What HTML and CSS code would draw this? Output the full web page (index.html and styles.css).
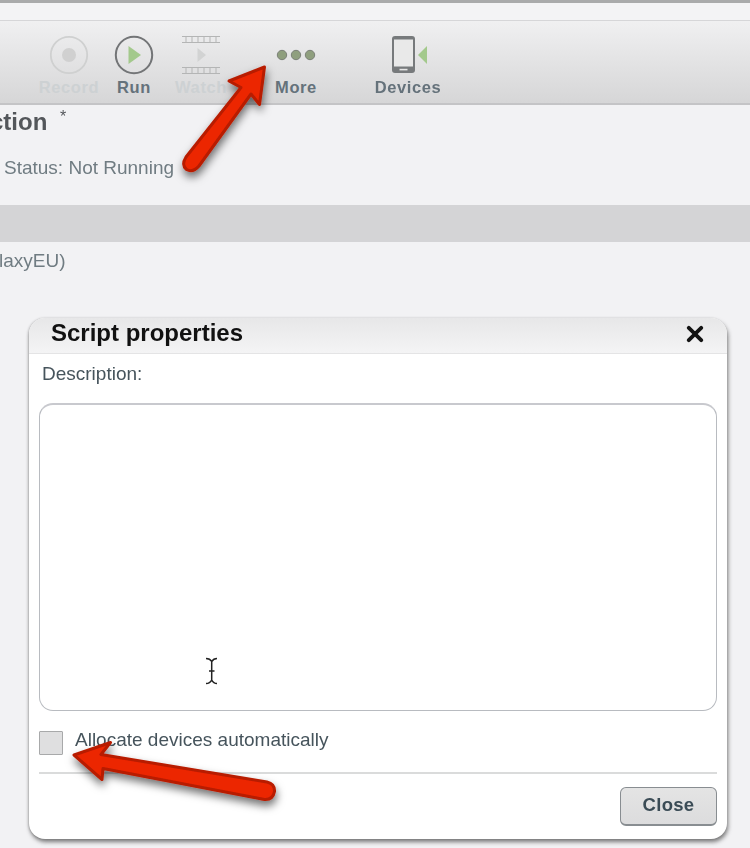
FILE: index.html
```html
<!DOCTYPE html>
<html lang="en">
<head>
<meta charset="utf-8">
<title>Script properties</title>
<link rel="stylesheet" href="styles.css">
</head>
<body>
<div class="page">
  <div class="topline"></div>
  <div class="topstrip"></div>
  <div class="toolbar">
    <div class="tool tool-off">
      <svg class="tool-icon" viewBox="0 0 40 40"><circle cx="20" cy="20" r="18.200" fill="none" stroke="#cfd0d0" stroke-width="1.800"/><circle cx="20" cy="20" r="7" fill="#d0d0d0"/></svg>
      <span class="tool-label">Record</span>
    </div>
    <div class="tool tool-run">
      <svg class="tool-icon" viewBox="0 0 40 40"><circle cx="20" cy="20" r="18.200" fill="none" stroke="#737577" stroke-width="2"/><path d="M14.500 11 L27 20 L14.500 29 Z" fill="#a3c98c"/></svg>
      <span class="tool-label">Run</span>
    </div>
    <div class="tool tool-off tool-watch">
      <svg class="tool-icon" viewBox="0 0 40 40"><g fill="none" stroke="#b4b5b5" stroke-width="1"><path d="M1 1.500H39M1 7.500H39M1 32.500H39M1 38.500H39"/><path d="M5 2V7M11 2V7M17 2V7M23 2V7M29 2V7M35 2V7M5 33V38M11 33V38M17 33V38M23 33V38M29 33V38M35 33V38"/></g><path d="M16.500 13 L25 20 L16.500 27 Z" fill="#d2d3d3"/></svg>
      <span class="tool-label">Watch</span>
    </div>
    <div class="tool tool-more">
      <svg class="tool-icon" viewBox="0 0 40 40"><g fill="#8f9f7e" stroke="#7b8077" stroke-width="1"><circle cx="6" cy="20" r="4.700"/><circle cx="20" cy="20" r="4.700"/><circle cx="34" cy="20" r="4.700"/></g></svg>
      <span class="tool-label">More</span>
    </div>
    <div class="tool tool-devices">
      <svg class="tool-icon" viewBox="0 0 40 40"><rect x="4" y="1" width="23" height="37" rx="3" fill="#777a7c"/><rect x="6" y="4.500" width="19" height="27" fill="#e9e9e9"/><rect x="11.500" y="33.800" width="8" height="1.600" fill="#e6e6e6"/><path d="M39 11 V29 L30 20 Z" fill="#a3c98c"/></svg>
      <span class="tool-label">Devices</span>
    </div>
  </div>
  <div class="summary">
    <h1 class="summary-title">ction <sup class="star">*</sup></h1>
    <p class="summary-status">Status: Not Running</p>
  </div>
  <div class="band"></div>
  <p class="device">laxyEU)</p>

  <section class="dialog">
    <header class="dialog-head">
      <h2 class="dialog-title">Script properties</h2>
      <svg class="dialog-x" viewBox="0 0 16 16"><path d="M2.500 2.500 L13.500 13.500 M13.500 2.500 L2.500 13.500" stroke="#141414" stroke-width="3.400" stroke-linecap="round"/></svg>
    </header>
    <div class="dialog-body">
      <label class="field-label" for="desc">Description:</label>
      <textarea class="field-area" id="desc"></textarea>
      <label class="check-row"><input class="check-box" type="checkbox"><span>Allocate devices automatically</span></label>
      <div class="dialog-foot"><button class="close-btn" type="button">Close</button></div>
    </div>
  </section>

  <svg class="overlay" viewBox="0 0 750 848" aria-hidden="true">
    <defs>
      <filter id="arrow-shadow" x="-30%" y="-30%" width="170%" height="170%"><feDropShadow dx="1" dy="5" stdDeviation="4" flood-color="#000" flood-opacity="0.55"/></filter>
    </defs>
    <g fill="#ec2600" stroke="#b81c00" stroke-width="3" stroke-linejoin="round" filter="url(#arrow-shadow)">
      <path d="M264.500 67 L259.500 104.500 L251 94 L199 166 Q193 173 186.500 169.500 Q181 165 186 157 L241 87.500 L229 81 Z"/>
      <path d="M74 755 L110.500 742.500 L101 754.500 L267 782 Q275 784 274.500 791.500 Q273 800 264.500 799.500 L103 768.500 L102 779.500 Z"/>
    </g>
    <path d="M206 658.500 Q210 658.500 211.700 661.500 Q213.500 658.500 217 658.500 M211.700 661.500 V680 M206 683.500 Q210 683.500 211.700 680 Q213.500 683.500 217 683.500 M209 671 H214.500" fill="none" stroke="#222" stroke-width="1.500"/>
  </svg>
</div>
</body>
</html>
```
FILE: styles.css
```css
* { box-sizing: border-box; }
html, body { margin: 0; padding: 0; }
body { width: 750px; height: 848px; overflow: hidden; background: #f2f2f4; font-family: "Liberation Sans", Arial, sans-serif; }
.page { position: relative; width: 750px; height: 848px; overflow: hidden; filter: blur(0.45px); }

.topline { height: 3px; background: #a9aaab; }
.topstrip { height: 17px; background: #f3f3f5; }

.toolbar { height: 85px; display: flex; padding-left: 39px; padding-top: 14px; border-top: 1px solid #d6d6d8; border-bottom: 2px solid #c4c4c6; background: linear-gradient(#f0f0f1, #d6d6d7); }
.tool { width: 60px; display: flex; flex-direction: column; align-items: center; }
.tool-run { margin-left: 5px; }
.tool-watch { margin-left: 7px; }
.tool-more { margin-left: 35px; }
.tool-devices { margin-left: 52px; }
.tool-icon { width: 40px; height: 40px; flex: none; }
.tool-label { margin-top: 3px; font-size: 16.500px; line-height: 18px; font-weight: 700; letter-spacing: 0.6px; color: #65727b; white-space: nowrap; }
.tool-off .tool-label { color: #cdd1d3; }

.summary { height: 100px; padding-top: 3px; }
.summary-title { margin: 0 0 0 -10px; font-size: 24px; line-height: 28px; font-weight: 700; color: #53565a; }
.star { font-size: 16px; font-weight: 400; line-height: 0; margin-left: 6px; vertical-align: 8px; }
.summary-status { margin: 21px 0 0 4px; font-size: 19px; line-height: 22px; color: #707c82; }

.band { height: 37px; background: #d4d4d6; }
.device { margin: 8px 0 0 -1px; font-size: 19px; line-height: 22px; color: #707c82; }

.dialog { margin: 46px 0 0 29px; width: 698px; height: 521px; background: #fff; border-radius: 16px; box-shadow: 1px 3px 4px rgba(40, 40, 40, 0.6), -1px 0 2px rgba(120, 120, 120, 0.3); display: flex; flex-direction: column; }
.dialog-head { flex: none; height: 36px; padding: 0 23px 0 22px; display: flex; align-items: center; justify-content: space-between; border-radius: 16px 16px 0 0; border-bottom: 1px solid #e4e4e5; background: linear-gradient(#e7e7e8, #f4f4f5); }
.dialog-title { margin: 0 0 5px; font-size: 24px; line-height: 30px; font-weight: 700; color: #111; }
.dialog-x { width: 18px; height: 18px; margin-bottom: 4px; }
.dialog-body { flex: 1; padding: 9px 10px 12px 10px; display: flex; flex-direction: column; }
.field-label { margin-left: 3px; font-size: 19px; line-height: 22px; color: #46545c; }
.field-area { display: block; margin: 18px 0 0 0; width: 678px; height: 308px; resize: none; background: #fff; border: 1px solid #b8bbc0; border-top: 2px solid #c8c9ce; border-radius: 14px; outline: none; }
.check-row { margin-top: 20px; display: flex; align-items: flex-start; gap: 12px; font-size: 19px; line-height: 20px; color: #46545c; height: 43px; border-bottom: 2px solid #dadbdb; }
.check-box { appearance: none; margin: 0; width: 24px; height: 24px; background: #dfdfe0; border: 1px solid #a8a9aa; border-radius: 1px; }
.check-row span { margin-top: -1px; }
.dialog-foot { display: flex; justify-content: flex-end; margin-top: 13px; }
.close-btn { width: 97px; height: 39px; padding: 0 0 3px; background: linear-gradient(#e4e4e4, #dcdcdd); border: 1px solid #888d91; border-bottom-width: 2px; border-radius: 6px; font-family: "Liberation Sans", Arial, sans-serif; font-size: 18.500px; font-weight: 700; letter-spacing: 0.3px; color: #3b4c56; }

.overlay { position: absolute; left: 0; top: 0; width: 750px; height: 848px; pointer-events: none; }
```
